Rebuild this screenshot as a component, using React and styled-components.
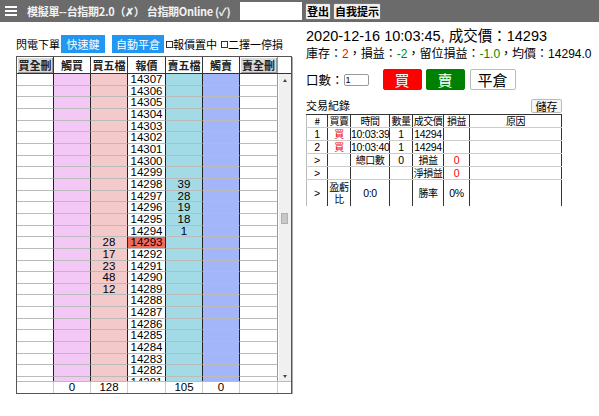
import React from 'react';
import styled, { createGlobalStyle } from 'styled-components';

const GlobalStyle = createGlobalStyle`
  body {
    margin: 0;
    background: #fff;
    font-family: "Liberation Sans", "Noto Sans CJK TC", sans-serif;
    font-size: 12px;
    color: #000;
  }
  * { box-sizing: border-box; }
`;

const cols = '37px 37px 37px 38px 37px 37px 38px';

const colors = {
  white: '#ffffff',
  touchBuy: '#f3c8f7',
  buy5: '#f3c9ca',
  sell5: '#a2dae6',
  touchSell: '#a3b6f9',
};

const TopBar = styled.div`
  height: 22px;
  background: #6b6b6b;
  display: flex;
  align-items: center;
  padding-left: 5px;
  color: #f2f2f2;
`;
const Burger = styled.div`
  width: 12px;
  display: flex;
  flex-direction: column;
  gap: 2px;
  margin-right: 10px;
  span {
    height: 2px;
    background: #fff;
  }
`;
const Title = styled.div`
  font-family: "Noto Sans CJK TC", sans-serif;
  font-weight: bold;
  font-size: 11px;
  letter-spacing: -0.3px;
  flex: 0 0 auto;
  width: 213px;
  white-space: nowrap;
`;
const TopInput = styled.input`
  width: 62px;
  height: 18px;
  border: none;
  background: #fff;
  margin-right: 1px;
`;
const TopButton = styled.button`
  font-family: "Noto Sans CJK TC", sans-serif;
  font-size: 11px;
  font-weight: bold;
  height: 17px;
  padding: 0 1px;
  margin-left: 2px;
  background: #efefef;
  border: 1px solid #767676;
  border-radius: 2px;
  line-height: 13px;
`;

const Main = styled.div`
  display: flex;
  padding-left: 16px;
  gap: 14px;
`;
const LeftPanel = styled.div`
  width: 276px;
  flex: 0 0 276px;
  display: flex;
  flex-direction: column;
`;
const Toolbar = styled.div`
  margin-top: 13px;
  height: 18px;
  display: flex;
  align-items: center;
  font-family: "Noto Sans CJK TC", sans-serif;
  font-size: 11px;
  white-space: nowrap;
`;
const BlueButton = styled.div`
  background: #2196f3;
  color: #fff;
  height: 18px;
  width: ${p => p.$w}px;
  flex: 0 0 auto;
  margin-left: ${p => p.$ml}px;
  display: flex;
  align-items: center;
  justify-content: center;
  font-size: 11px;
`;
const Check = styled.span`
  display: inline-block;
  width: 7px;
  height: 7px;
  border: 1px solid #333;
  margin: 0 0 0 ${p => (p.$first ? 2 : 4)}px;
`;

const OrderBook = styled.div`
  margin-top: 3px;
  border: 1px solid #555;
  box-shadow: 1px 1px 0 #aaa;
  width: 276px;
`;
const HeadRow = styled.div`
  display: grid;
  grid-template-columns: ${cols} 12px;
  height: 17px;
  border-bottom: 1px solid #333;
`;
const HeadCell = styled.div`
  font-family: "Noto Sans CJK TC", sans-serif;
  font-weight: bold;
  font-size: 11px;
  display: flex;
  align-items: center;
  justify-content: center;
  border-right: 1px solid ${p => (p.$last ? '#999' : '#333')};
  background: ${p => (p.$btn ? '#dcdcdc' : '#fff')};
  box-shadow: ${p => (p.$btn ? 'inset 1px 1px 0 #fff, inset -1px -1px 0 #999' : 'none')};
  color: #222;
`;
const Body = styled.div`
  display: flex;
  height: 307px;
  overflow: hidden;
`;
const Rows = styled.div`
  width: 262px;
`;
const Row = styled.div`
  display: grid;
  grid-template-columns: ${cols};
  height: 11.66px;
`;
const Cell = styled.div`
  background: ${p => p.$bg};
  border-right: 1px solid ${p => (p.$last ? '#999' : '#222')};
  border-bottom: 1px solid #bbb;
  text-align: center;
  font-size: 11.5px;
  line-height: 10.5px;
`;
const Scrollbar = styled.div`
  width: 12px;
  background: #f0f0f0;
  position: relative;
  display: flex;
  flex-direction: column;
  justify-content: space-between;
  align-items: center;
  padding: 5px 0 3px;
`;
const Arrow = styled.span`
  width: 0;
  height: 0;
  border-left: 2px solid transparent;
  border-right: 2px solid transparent;
  ${p => (p.$down ? 'border-top: 3px solid #444;' : 'border-bottom: 3px solid #444;')}
`;
const Thumb = styled.span`
  position: absolute;
  left: 2px;
  top: 139px;
  width: 7px;
  height: 11px;
  background: #c8c8c8;
  border: 1px solid #b0b0b0;
`;
const FootRow = styled.div`
  display: grid;
  grid-template-columns: ${cols} 12px;
  height: 12px;
  border-top: 1px solid #bbb;
`;
const FootCell = styled.div`
  text-align: center;
  font-size: 11.5px;
  line-height: 11px;
  border-right: 1px solid ${p => (p.$none ? 'transparent' : '#ccc')};
`;

const RightPanel = styled.div`
  width: 285px;
  display: flex;
  flex-direction: column;
`;
const PriceLine = styled.div`
  margin-top: 4px;
  font-size: 14.5px;
  line-height: 18px;
  white-space: nowrap;
`;
const InfoLine = styled.div`
  margin-top: 1px;
  font-size: 12px;
  line-height: 14px;
  white-space: nowrap;
`;
const Num = styled.span`
  color: ${p => p.$c};
`;
const Controls = styled.div`
  margin-top: 8px;
  height: 21px;
  display: flex;
  align-items: center;
  font-size: 12.5px;
`;
const QtyInput = styled.input`
  width: 25px;
  height: 12px;
  font-size: 9px;
  padding: 0 1px;
  margin-left: 0;
  border: 1px solid #999;
  border-radius: 2px;
`;
const TradeButton = styled.button`
  width: ${p => p.$w}px;
  height: 21px;
  margin-left: ${p => p.$ml}px;
  background: ${p => p.$bg};
  color: ${p => (p.$bg === '#fff' ? '#000' : '#fff')};
  border: 1px solid ${p => (p.$bg === '#fff' ? '#bbb' : p.$bg)};
  border-radius: 2px;
  font-family: "Noto Sans CJK TC", sans-serif;
  font-size: 15px;
  line-height: 19px;
  padding: 0;
`;
const RecordHead = styled.div`
  margin-top: 9px;
  width: 256px;
  height: 14px;
  display: flex;
  justify-content: space-between;
  align-items: flex-end;
  font-family: "Noto Sans CJK TC", sans-serif;
  font-size: 11px;
`;
const SaveButton = styled.button`
  font-family: "Noto Sans CJK TC", sans-serif;
  font-size: 11px;
  height: 14px;
  width: 31px;
  padding: 0;
  line-height: 12px;
  background: #f6f6f6;
  border: 1px solid #bbb;
  border-radius: 2px;
`;
const RecordTable = styled.table`
  margin-top: 1px;
  border-collapse: collapse;
  width: 256px;
  table-layout: fixed;
  font-size: 10.5px;
  th, td {
    padding: 0;
    text-align: center;
    border-left: 1px solid #333;
    border-right: 1px solid #333;
    border-bottom: 1px solid #ccc;
    height: 13px;
    line-height: 12px;
    white-space: nowrap;
    letter-spacing: -0.3px;
  }
  th {
    font-family: "Noto Sans CJK TC", sans-serif;
    font-weight: normal;
    font-size: 10px;
    letter-spacing: -0.5px;
    border-top: 1px solid #333;
  }
  th:first-child, td:first-child {
    border-left-color: #bbb;
  }
  tr:last-child td {
    height: 26px;
    border-bottom: none;
  }
`;
const Cjk = styled.span`
  font-family: "Noto Sans CJK TC", sans-serif;
  font-size: ${p => p.$fs || 'inherit'};
  letter-spacing: ${p => (p.$fs ? '-0.5px' : 'normal')};
  color: ${p => p.$c || 'inherit'};
`;
const Wrap = styled.div`
  white-space: normal;
  font-family: "Noto Sans CJK TC", sans-serif;
  font-size: 10px;
  line-height: 12px;
`;

const sell5 = { 14298: 39, 14297: 28, 14296: 19, 14295: 18, 14294: 1 };
const buy5 = { 14293: 28, 14292: 17, 14291: 23, 14290: 48, 14289: 12 };
const prices = Array.from({ length: 27 }, (_, i) => 14307 - i);

const App = () => {
  return (
    <>
      <GlobalStyle />
      <TopBar>
        <Burger>
          <span />
          <span />
          <span />
        </Burger>
        <Title>模擬單--台指期2.0（✗） 台指期Online (✓)</Title>
        <TopInput />
        <TopButton>登出</TopButton>
        <TopButton>自我提示</TopButton>
      </TopBar>
      <Main>
        <LeftPanel>
          <Toolbar>
            閃電下單
            <BlueButton $w={44} $ml={1}>快速鍵</BlueButton>
            <BlueButton $w={52} $ml={7}>自動平倉</BlueButton>
            <Check $first />報價置中<Check />二擇一停損
          </Toolbar>
          <OrderBook>
            <HeadRow>
              <HeadCell $btn>買全刪</HeadCell>
              <HeadCell>觸買</HeadCell>
              <HeadCell>買五檔</HeadCell>
              <HeadCell>報價</HeadCell>
              <HeadCell>賣五檔</HeadCell>
              <HeadCell>觸賣</HeadCell>
              <HeadCell $btn $last>賣全刪</HeadCell>
              <div />
            </HeadRow>
            <Body>
              <Rows>
                {prices.map(p => (
                  <Row key={p}>
                    <Cell $bg={colors.white} />
                    <Cell $bg={colors.touchBuy} />
                    <Cell $bg={colors.buy5}>{buy5[p]}</Cell>
                    <Cell $bg={p === 14293 ? '#f26a5c' : colors.white}>{p}</Cell>
                    <Cell $bg={colors.sell5}>{sell5[p]}</Cell>
                    <Cell $bg={colors.touchSell} />
                    <Cell $bg={colors.white} $last />
                  </Row>
                ))}
              </Rows>
              <Scrollbar>
                <Arrow />
                <Thumb />
                <Arrow $down />
              </Scrollbar>
            </Body>
            <FootRow>
              <FootCell />
              <FootCell>0</FootCell>
              <FootCell>128</FootCell>
              <FootCell />
              <FootCell>105</FootCell>
              <FootCell>0</FootCell>
              <FootCell />
              <FootCell $none />
            </FootRow>
          </OrderBook>
        </LeftPanel>
        <RightPanel>
          <PriceLine>
            2020-12-16 10:03:45, <Cjk>成交價：</Cjk>14293
          </PriceLine>
          <InfoLine>
            <Cjk>庫存：</Cjk><Num $c="#f00">2</Num><Cjk>，損益：</Cjk><Num $c="#080">-2</Num>
            <Cjk>，留位損益：</Cjk><Num $c="#080">-1.0</Num><Cjk>，均價：</Cjk><Num>14294.0</Num>
          </InfoLine>
          <Controls>
            <Cjk>口數：</Cjk>
            <QtyInput defaultValue="1" />
            <TradeButton $w={39} $ml={14} $bg="#ff0000">買</TradeButton>
            <TradeButton $w={39} $ml={4} $bg="#008000">賣</TradeButton>
            <TradeButton $w={46} $ml={5} $bg="#fff">平倉</TradeButton>
          </Controls>
          <RecordHead>
            交易紀錄
            <SaveButton>儲存</SaveButton>
          </RecordHead>
          <RecordTable>
            <colgroup>
              <col style={{ width: 21 }} />
              <col style={{ width: 23 }} />
              <col style={{ width: 39 }} />
              <col style={{ width: 23 }} />
              <col style={{ width: 31 }} />
              <col style={{ width: 26 }} />
              <col />
            </colgroup>
            <thead>
              <tr>
                <th>#</th>
                <th>買賣</th>
                <th>時間</th>
                <th>數量</th>
                <th>成交價</th>
                <th>損益</th>
                <th>原因</th>
              </tr>
            </thead>
            <tbody>
              <tr>
                <td>1</td>
                <td><Cjk $c="#e00" $fs="10px">買</Cjk></td>
                <td>10:03:39</td>
                <td>1</td>
                <td>14294</td>
                <td />
                <td />
              </tr>
              <tr>
                <td>2</td>
                <td><Cjk $c="#e00" $fs="10px">買</Cjk></td>
                <td>10:03:40</td>
                <td>1</td>
                <td>14294</td>
                <td />
                <td />
              </tr>
              <tr>
                <td>&gt;</td>
                <td />
                <td><Cjk $fs="10px">總口數</Cjk></td>
                <td>0</td>
                <td><Cjk $fs="10px">損益</Cjk></td>
                <td><Num $c="#f00">0</Num></td>
                <td />
              </tr>
              <tr>
                <td>&gt;</td>
                <td />
                <td />
                <td />
                <td><Cjk $fs="10px">淨損益</Cjk></td>
                <td><Num $c="#f00">0</Num></td>
                <td />
              </tr>
              <tr>
                <td>&gt;</td>
                <td><Wrap>盈虧比</Wrap></td>
                <td>0:0</td>
                <td />
                <td><Cjk $fs="10px">勝率</Cjk></td>
                <td>0%</td>
                <td />
              </tr>
            </tbody>
          </RecordTable>
        </RightPanel>
      </Main>
    </>
  );
};

export default App;
